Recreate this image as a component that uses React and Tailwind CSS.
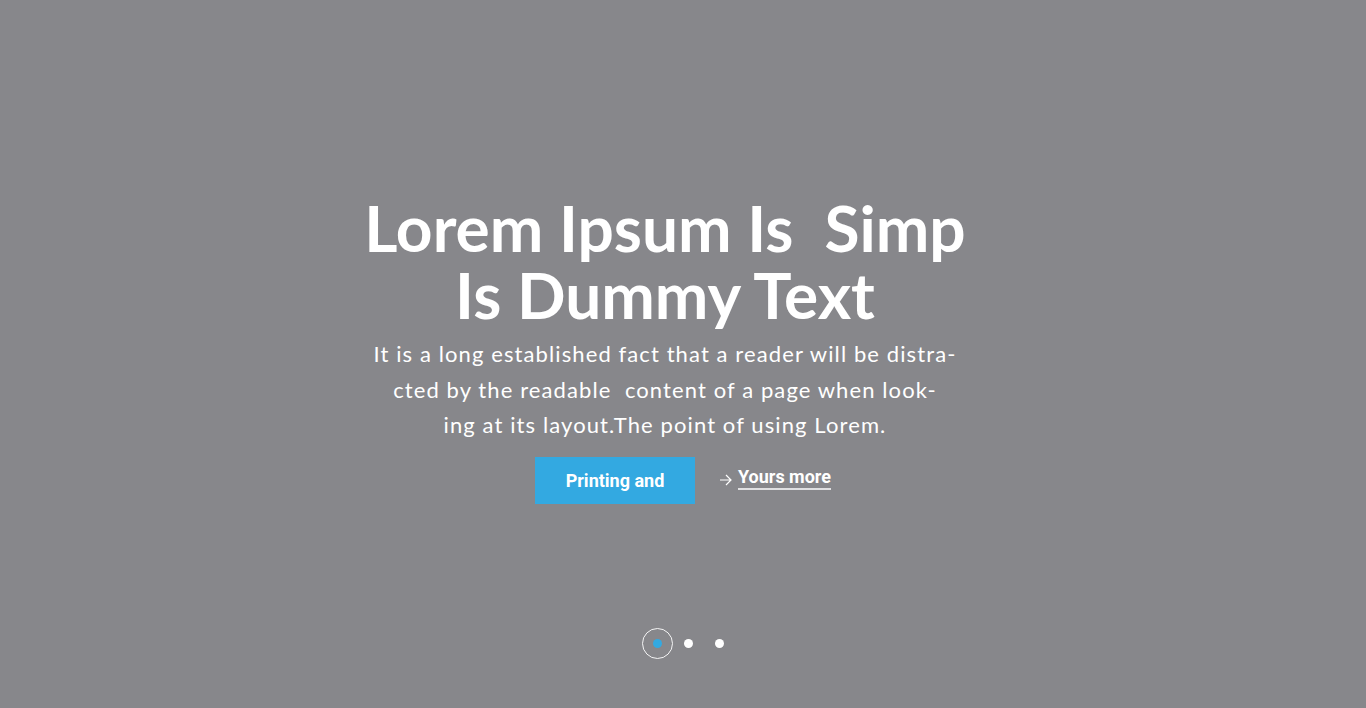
import React from 'react';

const Dots = () => (
    <div className="flex items-center justify-center ml-[10px]">
        <span className="w-[31px] h-[31px] rounded-full border border-white/90 flex items-center justify-center">
            <span className="w-[9px] h-[9px] rounded-full bg-[#33a9e1]" />
        </span>
        <span className="w-[31px] h-[31px] flex items-center justify-center">
            <span className="w-[9px] h-[9px] rounded-full bg-white" />
        </span>
        <span className="w-[31px] h-[31px] flex items-center justify-center">
            <span className="w-[9px] h-[9px] rounded-full bg-white" />
        </span>
    </div>
);

export default function App() {
    return (
        <div className="w-full h-[708px] bg-[#87878b] flex flex-col items-center overflow-hidden">
            {/* Hero text */}
            <div className="flex flex-col items-center pt-[194px] pr-[36px]">
                <h1
                    className="text-white text-center font-bold text-[64px] leading-[67px]"
                    style={{ fontFamily: 'Lato, "Open Sans", sans-serif' }}
                >
                    Lorem Ipsum Is&nbsp; Simp<br />Is Dummy Text
                </h1>
                <p
                    className="text-white text-center text-[22px] leading-[35.5px] mt-[8px] tracking-[1.1px]"
                    style={{ fontFamily: 'Lato, "Open Sans", sans-serif' }}
                >
                    It is a long established fact that a reader will be distra-<br />
                    cted by the readable&nbsp; content of a page when look-<br />
                    ing at its layout.The point of using Lorem.
                </p>
            </div>

            {/* Actions */}
            <div className="flex items-center mt-[14px] gap-[24px]" style={{ fontFamily: 'Roboto, sans-serif' }}>
                <button className="w-[160px] h-[47px] bg-[#33a9e1] text-white font-bold text-[18px]">
                    Printing and
                </button>
                <a className="flex items-center gap-[5px] text-white font-bold text-[18px]">
                    <svg width="14" height="12" viewBox="0 0 14 12" fill="none" stroke="white" strokeWidth="1.2">
                        <path d="M1 6h11M7 1l5 5-5 5" />
                    </svg>
                    <span className="border-b-2 border-[#e0e0e2] pb-[1px] leading-[21px] -mt-[4px]">Yours more</span>
                </a>
            </div>

            <div className="mt-auto mb-[49px]">
                <Dots />
            </div>
        </div>
    );
}
